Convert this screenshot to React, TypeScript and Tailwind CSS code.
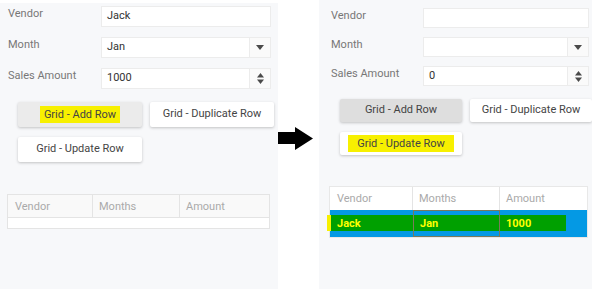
import React from "react";

const font = { fontFamily: "Roboto, 'Liberation Sans', Arial, sans-serif" };

const Caret = () => (
  <svg width="8" height="5" viewBox="0 0 8 5">
    <polygon points="0,0 8,0 4,5" fill="#4a4a4a" />
  </svg>
);

const Spinner = () => (
  <svg width="7" height="11" viewBox="0 0 7 11">
    <polygon points="3.5,0 7,4.5 0,4.5" fill="#4a4a4a" />
    <polygon points="0,6.5 7,6.5 3.5,11" fill="#4a4a4a" />
  </svg>
);

type FormProps = {
  vendor: string;
  month: string;
  amount: string;
  labelW: string;
  inputW: string;
  inputH: string;
  gap: string;
};

const FormRows = ({ vendor, month, amount, labelW, inputW, inputH, gap }: FormProps) => {
  const rows = [
    { label: "Vendor", value: vendor, addon: null },
    { label: "Month", value: month, addon: <Caret /> },
    { label: "Sales Amount", value: amount, addon: <Spinner /> },
  ];
  return (
    <div className={`flex flex-col ${gap}`}>
      {rows.map((r) => (
        <div key={r.label} className="flex items-start">
          <div className={`${labelW} shrink-0 text-[11px] leading-[16px] text-[#777]`}>{r.label}</div>
          <div className={`${inputW} ${inputH} flex items-center bg-white border border-[#ececec]`}>
            <div className="flex-1 pl-[5px] text-[11px] text-[#333]">{r.value}</div>
            {r.addon && (
              <div className="w-[21px] h-full flex items-center justify-center border-l border-[#ececec] bg-[#fafafa]">
                {r.addon}
              </div>
            )}
          </div>
        </div>
      ))}
    </div>
  );
};

const Btn = ({
  children,
  gray,
  cls,
}: {
  children: React.ReactNode;
  gray?: string;
  cls: string;
}) => (
  <div
    className={`${cls} flex items-center justify-center rounded-[2px] shadow-[0_1px_3px_rgba(0,0,0,0.22)] text-[11px] text-[#444] ${
      gray ?? "bg-white"
    }`}
  >
    {children}
  </div>
);

export default function App() {
  return (
    <div className="flex w-[592px] h-[289px] bg-white overflow-hidden" style={font}>
      {/* before */}
      <div className="mt-[3px] w-[278px] h-[286px] shrink-0 bg-[#f7f8fa] pt-[3px] pl-[8px]">
        <FormRows
          vendor="Jack"
          month="Jan"
          amount="1000"
          labelW="w-[93px]"
          inputW="w-[170px]"
          inputH="h-[21px]"
          gap="gap-[10px]"
        />
        <div className="mt-[13px] pl-[10px] flex flex-col gap-[10px]">
          <div className="flex gap-[8px]">
            <Btn cls="w-[124px] h-[25px]" gray="bg-[#ebebeb]">
              <span className="bg-[#f7f000] px-[4px] leading-[17px]">Grid - Add Row</span>
            </Btn>
            <Btn cls="w-[124px] h-[25px]">Grid - Duplicate Row</Btn>
          </div>
          <Btn cls="w-[124px] h-[25px]">Grid - Update Row</Btn>
        </div>
        <div className="mt-[32px] -ml-[1px] w-[263px] border border-[#e4e4e4] bg-white">
          <div className="flex h-[23px] bg-[#f9f9f9] border-b border-[#e4e4e4] text-[11px] text-[#aaa]">
            <div className="w-[85px] pl-[7px] leading-[23px] border-r border-[#e4e4e4]">Vendor</div>
            <div className="w-[87px] pl-[6px] leading-[23px] border-r border-[#e4e4e4]">Months</div>
            <div className="flex-1 pl-[6px] leading-[23px]">Amount</div>
          </div>
          <div className="h-[10px] bg-white" />
        </div>
      </div>

      {/* arrow */}
      <div className="w-[41px] shrink-0 pt-[127px]">
        <svg width="36" height="23" viewBox="0 0 36 23">
          <polygon points="0,5 17,5 17,0 35,11.5 17,23 17,17 0,17" fill="#000" />
        </svg>
      </div>

      {/* after */}
      <div className="w-[273px] h-[289px] shrink-0 bg-[#f7f8fa] pt-[8px] pl-[12px]">
        <FormRows
          vendor=""
          month=""
          amount="0"
          labelW="w-[92px]"
          inputW="w-[166px]"
          inputH="h-[20px]"
          gap="gap-[9px]"
        />
        <div className="mt-[13px] pl-[9px] flex flex-col gap-[10px]">
          <div className="flex gap-[8px]">
            <Btn cls="w-[122px] h-[23px] shrink-0" gray="bg-[#dedede]">Grid - Add Row</Btn>
            <Btn cls="w-[122px] h-[23px] shrink-0">Grid - Duplicate Row</Btn>
          </div>
          <Btn cls="w-[122px] h-[23px]">
            <span className="bg-[#f7f000] px-[9px] leading-[17px]">Grid - Update Row</span>
          </Btn>
        </div>
        <div className="mt-[31px] -ml-[2px] w-[259px] border border-[#e8e8e8] bg-white">
          <div className="flex h-[23px] bg-white text-[11px] text-[#aaa]">
            <div className="w-[83px] pl-[7px] leading-[23px] border-r border-[#e4e4e4]">Vendor</div>
            <div className="w-[87px] pl-[6px] leading-[23px] border-r border-[#e4e4e4]">Months</div>
            <div className="flex-1 pl-[6px] leading-[23px]">Amount</div>
          </div>
          <div className="relative flex h-[27px] bg-[#0499e4] text-[11px] font-bold text-[#ffff00]">
            <div className="absolute left-0 top-[5px] w-[236px] h-[16px] bg-[#00a000]" />
            <div className="absolute -left-[3px] top-[5px] w-[4px] h-[16px] bg-[#f7f000]" />
            <div className="relative w-[83px] pl-[7px] leading-[27px]">Jack</div>
            <div className="relative w-[87px] pl-[6px] leading-[25px] border border-[#7a7a5a]">Jan</div>
            <div className="relative flex-1 pl-[6px] leading-[27px]">1000</div>
          </div>
        </div>
      </div>
    </div>
  );
}
